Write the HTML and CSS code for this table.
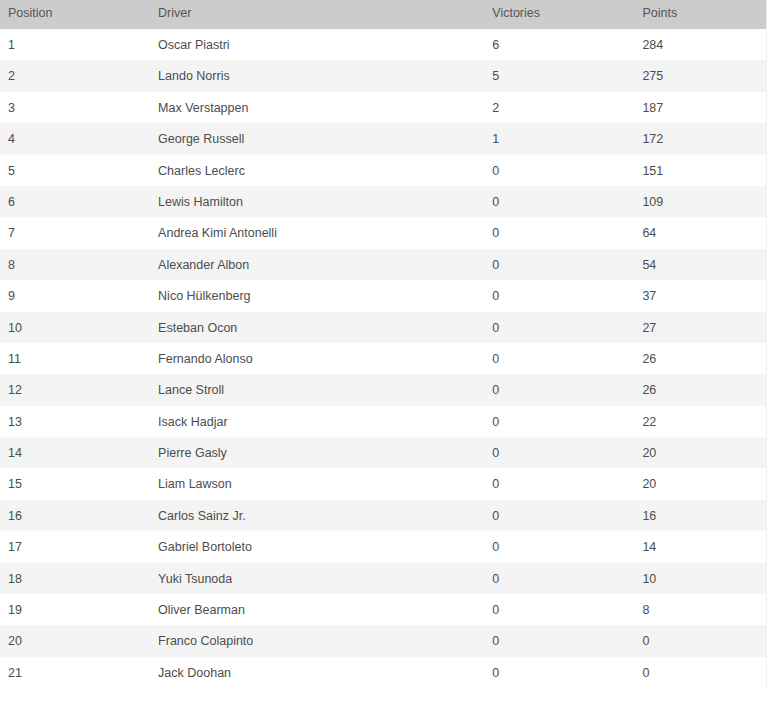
FILE: index.html
```html
<!DOCTYPE html>
<html lang="en">
<head>
<meta charset="utf-8">
<title>Driver Standings</title>
<link rel="stylesheet" href="styles.css">
</head>
<body>
<table class="standings">
  <colgroup>
    <col class="c-pos"><col class="c-driver"><col class="c-wins"><col class="c-pts">
  </colgroup>
  <thead>
    <tr><th>Position</th><th>Driver</th><th>Victories</th><th>Points</th></tr>
  </thead>
  <tbody>
    <tr><td>1</td><td>Oscar Piastri</td><td>6</td><td>284</td></tr>
    <tr><td>2</td><td>Lando Norris</td><td>5</td><td>275</td></tr>
    <tr><td>3</td><td>Max Verstappen</td><td>2</td><td>187</td></tr>
    <tr><td>4</td><td>George Russell</td><td>1</td><td>172</td></tr>
    <tr><td>5</td><td>Charles Leclerc</td><td>0</td><td>151</td></tr>
    <tr><td>6</td><td>Lewis Hamilton</td><td>0</td><td>109</td></tr>
    <tr><td>7</td><td>Andrea Kimi Antonelli</td><td>0</td><td>64</td></tr>
    <tr><td>8</td><td>Alexander Albon</td><td>0</td><td>54</td></tr>
    <tr><td>9</td><td>Nico Hülkenberg</td><td>0</td><td>37</td></tr>
    <tr><td>10</td><td>Esteban Ocon</td><td>0</td><td>27</td></tr>
    <tr><td>11</td><td>Fernando Alonso</td><td>0</td><td>26</td></tr>
    <tr><td>12</td><td>Lance Stroll</td><td>0</td><td>26</td></tr>
    <tr><td>13</td><td>Isack Hadjar</td><td>0</td><td>22</td></tr>
    <tr><td>14</td><td>Pierre Gasly</td><td>0</td><td>20</td></tr>
    <tr><td>15</td><td>Liam Lawson</td><td>0</td><td>20</td></tr>
    <tr><td>16</td><td>Carlos Sainz Jr.</td><td>0</td><td>16</td></tr>
    <tr><td>17</td><td>Gabriel Bortoleto</td><td>0</td><td>14</td></tr>
    <tr><td>18</td><td>Yuki Tsunoda</td><td>0</td><td>10</td></tr>
    <tr><td>19</td><td>Oliver Bearman</td><td>0</td><td>8</td></tr>
    <tr><td>20</td><td>Franco Colapinto</td><td>0</td><td>0</td></tr>
    <tr><td>21</td><td>Jack Doohan</td><td>0</td><td>0</td></tr>
  </tbody>
</table>
</body>
</html>
```
FILE: styles.css
```css
html, body {
  margin: 0;
  padding: 0;
  background: #ffffff;
}

body {
  font-family: "Liberation Sans", Arial, sans-serif;
  font-size: 12.5px;
  color: #4d4d4d;
}

.standings {
  border-collapse: collapse;
  border-spacing: 0;
  table-layout: fixed;
  width: 767px;
  border-right: 1px solid #f0f0f0;
}

.c-pos { width: 150px; }
.c-driver { width: 334px; }
.c-wins { width: 150px; }
.c-pts { width: 132px; }

.standings th,
.standings td {
  text-align: left;
  font-weight: normal;
  line-height: 15px;
  padding: 0 8px;
  vertical-align: top;
  white-space: nowrap;
}

.standings thead tr {
  height: 29px;
  background: #cccccc;
}

.standings th {
  padding-top: 6px;
  color: #555555;
}

.standings tbody tr {
  height: 31.4px;
}

.standings td {
  padding-top: 9px;
}

.standings tbody tr:nth-child(even) {
  background: #f4f4f4;
}
```
